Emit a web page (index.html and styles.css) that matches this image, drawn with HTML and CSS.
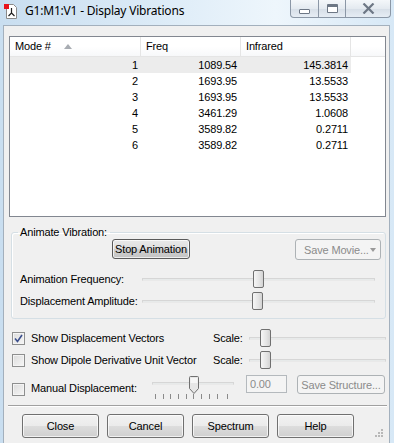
FILE: index.html
```html
<!doctype html>
<html>
<head>
<meta charset="utf-8">
<title>Display Vibrations</title>
<link rel="stylesheet" href="styles.css">
</head>
<body>
<div class="win">
	<div class="titlebar">
		<svg class="appicon" width="15" height="15" viewBox="0 0 15 15">
			<path d="M2.5 .5h7l3 3v11h-10z" fill="#fff" stroke="#8a8a8a"/>
			<path d="M7.5 4v5M7.5 9l-3 3M7.5 9l3 3" stroke="#222" stroke-width="1.2" fill="none"/>
			<rect x="0" y="0" width="5" height="5" fill="#e8141b"/>
		</svg>
		<span class="title">G1:M1:V1 - Display Vibrations</span>
		<div class="caption">
			<span class="cbtn min"><i></i></span>
			<span class="cbtn max"><i></i></span>
			<span class="cbtn close">
				<svg width="13" height="11" viewBox="0 0 13 11"><path d="M1.5 .5l10 10M11.5 .5l-10 10" stroke="#6d7785" stroke-width="2.2" fill="none"/></svg>
			</span>
		</div>
	</div>
	<div class="frame">
		<div class="client">
			<div class="list">
				<div class="lhead">
					<div class="hc c1">Mode # <span class="sort"></span></div>
					<div class="hc c2">Freq</div>
					<div class="hc c3">Infrared</div>
					<div class="hc c4"></div>
				</div>
				<div class="row sel"><span class="c1">1</span><span class="c2">1089.54</span><span class="c3">145.3814</span></div>
				<div class="row"><span class="c1">2</span><span class="c2">1693.95</span><span class="c3">13.5533</span></div>
				<div class="row"><span class="c1">3</span><span class="c2">1693.95</span><span class="c3">13.5533</span></div>
				<div class="row"><span class="c1">4</span><span class="c2">3461.29</span><span class="c3">1.0608</span></div>
				<div class="row"><span class="c1">5</span><span class="c2">3589.82</span><span class="c3">0.2711</span></div>
				<div class="row"><span class="c1">6</span><span class="c2">3589.82</span><span class="c3">0.2711</span></div>
			</div>

			<fieldset class="grp">
				<legend>Animate Vibration:</legend>
				<div class="btnrow">
					<button class="btn stop">Stop Animation</button>
					<button class="btn dis movie">Save Movie... <span class="arrow"></span></button>
				</div>
				<div class="srow first">
					<span class="slbl">Animation Frequency:</span>
					<div class="track wide"><span class="thumb" style="left:110px"></span></div>
				</div>
				<div class="srow">
					<span class="slbl">Displacement Amplitude:</span>
					<div class="track wide"><span class="thumb" style="left:109px"></span></div>
				</div>
			</fieldset>

			<div class="crow first">
				<span class="chk on"><svg width="9" height="9" viewBox="0 0 9 9"><path d="M1 4.5l2.5 3L8 1" stroke="#3b4f8c" stroke-width="1.6" fill="none"/></svg></span>
				<span class="clbl">Show Displacement Vectors</span>
				<span class="scl">Scale:</span>
				<div class="track short"><span class="thumb" style="left:10px"></span></div>
			</div>
			<div class="crow">
				<span class="chk"></span>
				<span class="clbl">Show Dipole Derivative Unit Vector</span>
				<span class="scl">Scale:</span>
				<div class="track short"><span class="thumb" style="left:10px"></span></div>
			</div>
			<div class="crow manual">
				<span class="chk"></span>
				<span class="clbl mlbl">Manual Displacement:</span>
				<div class="mslider">
					<div class="track mtrack">
						<svg class="pthumb" style="left:36px" width="10" height="18" viewBox="0 0 10 18"><path d="M.5 1.5q0-1 1-1h7q1 0 1 1v11l-4.5 5l-4.5-5z" fill="#e6e6e6" stroke="#707070"/><path d="M1.5 2h7v5h-7z" fill="#f6f6f6"/></svg>
					</div>
					<div class="ticks"><i></i><i></i><i></i><i></i><i></i><i></i><i></i><i></i><i></i><i></i></div>
				</div>
				<span class="field">0.00</span>
				<button class="btn dis struct">Save Structure...</button>
			</div>

			<div class="sep"></div>

			<div class="foot">
				<button class="btn fb">Close</button>
				<button class="btn fb">Cancel</button>
				<button class="btn fb">Spectrum</button>
				<button class="btn fb">Help</button>
				<svg class="grip" width="8" height="8" viewBox="0 0 8 8" fill="#b8b8b8">
					<rect x="6" y="0" width="2" height="2"/><rect x="3" y="3" width="2" height="2"/><rect x="6" y="3" width="2" height="2"/>
					<rect x="0" y="6" width="2" height="2"/><rect x="3" y="6" width="2" height="2"/><rect x="6" y="6" width="2" height="2"/>
				</svg>
			</div>
		</div>
	</div>
</div>
</body>
</html>
```

FILE: styles.css
```css
*{ margin:0; padding:0; box-sizing:border-box;}
body{ background:#fff; font-family:"Liberation Sans", Arial, sans-serif; font-size:11px; letter-spacing:-.15px; color:#000;}

.win{ width:394px; height:443px; overflow:hidden; background:linear-gradient(90deg,#c9def0 0%,#dcebf7 40%,#eef6fc 70%,#d7e8f6 100%);}

/* title bar */
.titlebar{ height:25px; display:flex; align-items:flex-start;}
.appicon{ margin:4px 0 0 4px; flex:none;}
.title{ font-family:"Noto Sans", "Open Sans", sans-serif; font-size:12px; line-height:16px; margin:3px 0 0 6px; color:#000; letter-spacing:-.2px;}
.caption{ margin-left:auto; margin-right:3px; display:flex; height:18px;}
.cbtn{ display:flex; align-items:center; justify-content:center; height:18px; border:1px solid #8b97a6; border-top:none; background:linear-gradient(#f4f7fa,#e4eaf0 50%,#d6dee7 51%,#e6edf4); margin-left:-1px;}
.cbtn.min{ width:29px; border-radius:0 0 0 4px;}
.cbtn.max{ width:28px;}
.cbtn.close{ width:46px; border-radius:0 0 4px 0;}
.cbtn.min i{ width:11px; height:5px; border:1px solid #6d7785; background:#fff; margin-top:5px; border-radius:1px;}
.cbtn.max i{ width:11px; height:9px; border:1px solid #6d7785; border-top-width:3px; background:#fff; border-radius:1px;}

.frame{ padding:0 4px 0 3px;}
.client{ height:418px; background:#f0f0f0; border:1px solid #a3b0bd; border-bottom:none; padding:10px 0 0 5px;}

/* list view */
.list{ width:377px; height:181px; background:#fff; border:1px solid #828790;}
.lhead{ display:flex; height:20px; border-bottom:1px solid #e5e5e5; background:linear-gradient(#fff 50%,#f7f8fa);}
.hc{ line-height:19px; padding-left:5px; border-right:1px solid #e5e5e5; position:relative;}
.hc.c4{ flex:1; border-right:none;}
.c1{ width:131px;}
.c2{ width:100px;}
.c3{ width:110px;}
.sort{ position:absolute; left:54px; top:7px; width:0; height:0; border-left:4px solid transparent; border-right:4px solid transparent; border-bottom:5px solid #a8acb2;}
.row{ display:flex; height:16px; line-height:16px; width:341px;}
.row span{ text-align:right;}
.row .c1{ padding-right:3px;}
.row .c2{ padding-right:4px;}
.row .c3{ padding-right:3px;}
.row.sel{ background:#ececec;}

/* buttons */
.btn{ font-family:inherit; font-size:11px; letter-spacing:-.15px; color:#000; border:1px solid #707070; border-radius:3px; background:linear-gradient(#f2f2f2 0%,#ebebeb 50%,#dddddd 51%,#cfcfcf 100%); box-shadow:inset 0 0 0 1px rgba(255,255,255,.7);}
.btn.dis{ color:#8b8b8b; border-color:#adb2b5; background:#f4f4f4; box-shadow:none;}

/* group */
.grp{ width:375px; margin:9px 0 0 2px; border:1px solid #d5dfe5; border-radius:3px; padding:0 4px 6px 8px; box-shadow:inset 1px 1px 0 #fff;}
.grp legend{ margin-left:-2px; padding:0 3px 0 2px; line-height:13px;}
.btnrow{ display:flex; height:20px;}
.btn.stop{ width:78px; height:20px; margin-left:92px; padding:0; border-color:#5a5a5a; background:linear-gradient(#e9e9e9 0%,#dedede 50%,#cfcfcf 51%,#c4c4c4 100%);}
.btn.movie{ width:86px; height:21px; margin-left:auto; text-align:left; padding-left:8px; position:relative;}
.arrow{ position:absolute; right:4px; top:8px; border-left:3px solid transparent; border-right:3px solid transparent; border-top:4px solid #9a9a9a;}
.srow{ display:flex; align-items:center; height:22px;}
.srow.first{ margin-top:9px;}
.slbl{ width:122px;}

/* sliders */
.track{ height:3px; border:1px solid #d6d6d6; border-bottom-color:#e9e9e9; background:#e7eaea; position:relative;}
.track.wide{ width:233px;}
.thumb{ position:absolute; top:-9px; width:11px; height:18px; border:1px solid #707070; border-radius:2px; background:linear-gradient(90deg,#f6f6f6,#e4e4e4 60%,#d3d3d3);}

/* check rows */
.crow{ display:flex; align-items:center; height:22px; margin-left:3px;}
.crow.first{ margin-top:8px;}
.chk{ width:13px; height:13px; border:1px solid #8e8f8f; background:linear-gradient(135deg,#dcdcdc,#f6f6f6); box-shadow:inset 0 0 0 1px #f4f4f4; display:flex; align-items:center; justify-content:center; flex:none;}
.clbl{ margin-left:6px; width:182px;}
.scl{ width:36px;}
.track.short{ width:137px;}
.crow.manual{ align-items:flex-start; height:31px; margin-top:3px;}
.crow.manual .chk{ margin-top:9px;}
.crow.manual .mlbl{ width:121px; margin-top:8px; line-height:13px;}
.mslider{ width:84px; padding-top:8px;}
.track.mtrack{ width:82px;}
.pthumb{ position:absolute; top:-7px;}
.ticks{ display:flex; margin:9px 0 0 3px;}
.ticks i{ width:1px; height:5px; background:#8a8a8a; margin-right:6.7px;}
.ticks i:last-child{ margin-left:3px;}
.field{ width:41px; height:18px; margin:1px 0 0 10px; border:1px solid #b4b9bd; background:#f4f4f4; color:#8b8b8b; line-height:16px; padding-left:3px;}
.btn.struct{ width:88px; height:19px; margin:1px 0 0 10px;}

.sep{ width:379px; height:2px; border-top:1px solid #a0a0a0; border-bottom:1px solid #fff; margin-left:-1px;}
.foot{ display:flex; gap:8px; padding:7px 0 0 13px; align-items:flex-start;}
.btn.fb{ width:77px; height:24px;}
.grip{ margin:15px 0 0 13px;}
```
